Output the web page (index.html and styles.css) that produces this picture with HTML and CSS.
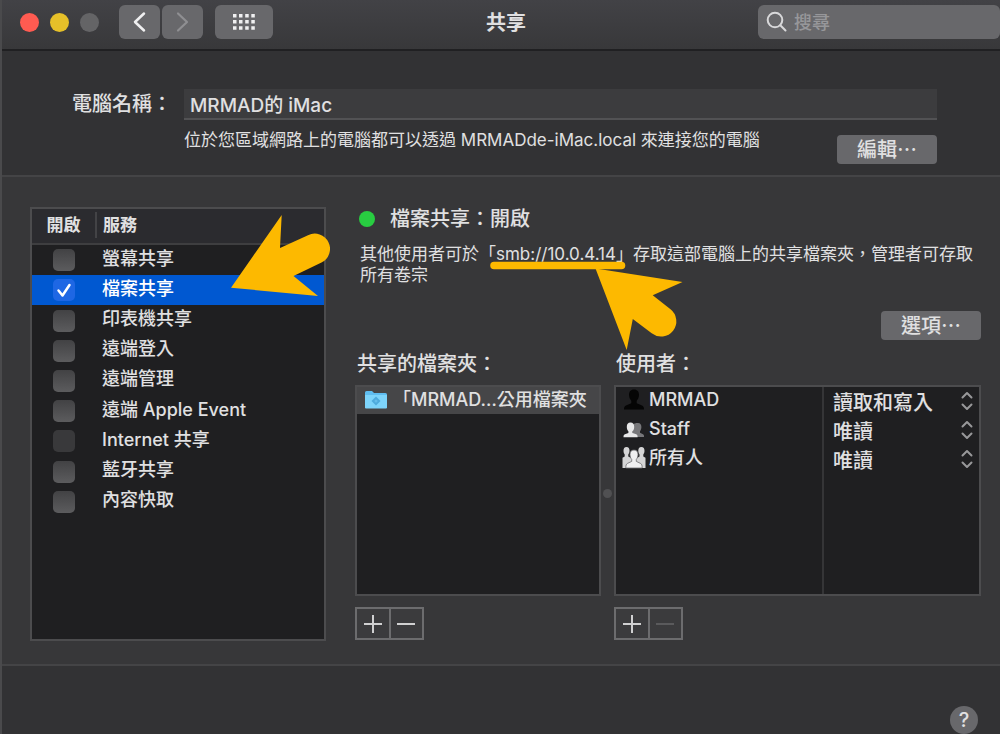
FILE: index.html
```html
<!DOCTYPE html>
<html lang="zh-Hant">
<head>
<meta charset="utf-8">
<title>共享</title>
<meta name="viewport" content="width=device-width, initial-scale=1">
<link rel="stylesheet" href="styles.css">
</head>
<body>
<div class="window">
  <header class="toolbar">
    <div class="toolbar-left">
      <div class="lights">
        <button class="light light-close" type="button" aria-label="關閉"></button>
        <button class="light light-min" type="button" aria-label="縮到最小"></button>
        <button class="light light-zoom" type="button" aria-label="縮放" disabled></button>
      </div>
      <div class="nav">
        <button class="tool" type="button" aria-label="返回"><svg width="41" height="34" viewBox="0 0 41 34"><path d="M25 8.500L16 17l9 8.500" fill="none" stroke="#f0f0f1" stroke-width="2.500" stroke-linecap="round" stroke-linejoin="round"/></svg></button>
        <button class="tool" type="button" aria-label="前往" disabled><svg width="41" height="34" viewBox="0 0 41 34"><path d="M16 8.500L25 17l-9 8.500" fill="none" stroke="#8f8f92" stroke-width="2.200" stroke-linecap="round" stroke-linejoin="round"/></svg></button>
      </div>
      <button class="tool tool-grid" type="button" aria-label="顯示全部"><svg width="58" height="34" viewBox="0 0 58 34" fill="#f0f0f1"><path d="M18 9h3.500v3.500H18zM24 9h3.500v3.500H24zM30.200 9h3.500v3.500h-3.500zM36.300 9h3.500v3.500h-3.500zM18 15h3.500v3.500H18zM24 15h3.500v3.500H24zM30.200 15h3.500v3.500h-3.500zM36.300 15h3.500v3.500h-3.500zM18 21.200h3.500v3.500H18zM24 21.200h3.500v3.500H24zM30.200 21.200h3.500v3.500h-3.500zM36.300 21.200h3.500v3.500h-3.500z"/></svg></button>
    </div>
    <h1 class="title">共享</h1>
    <label class="search">
      <svg width="22" height="22" viewBox="0 0 22 22" fill="none" stroke="#d8d8da" stroke-width="2" stroke-linecap="round"><circle cx="9" cy="9" r="7.300"/><path d="M14.300 14.300L19.500 19.500"/></svg>
      <input type="search" placeholder="搜尋" aria-label="搜尋">
    </label>
  </header>

  <section class="identity">
    <label class="name-label" for="computer-name">電腦名稱：</label>
    <input class="name-input" id="computer-name" type="text" value="MRMAD的 iMac">
    <div class="name-note">
      <p>位於您區域網路上的電腦都可以透過 MRMADde-iMac.local 來連接您的電腦</p>
      <button class="push" type="button">編輯⋯</button>
    </div>
  </section>

  <main class="content">
    <div class="services">
      <table>
        <thead><tr><th class="col-on" scope="col"><span>開啟</span></th><th scope="col">服務</th></tr></thead>
        <tbody>
          <tr><td><input id="s1" type="checkbox"></td><td><label for="s1">螢幕共享</label></td></tr>
          <tr class="selected"><td><input id="s2" type="checkbox" checked></td><td><label for="s2">檔案共享</label></td></tr>
          <tr><td><input id="s3" type="checkbox"></td><td><label for="s3">印表機共享</label></td></tr>
          <tr><td><input id="s4" type="checkbox"></td><td><label for="s4">遠端登入</label></td></tr>
          <tr><td><input id="s5" type="checkbox"></td><td><label for="s5">遠端管理</label></td></tr>
          <tr><td><input id="s6" type="checkbox"></td><td><label for="s6">遠端 Apple Event</label></td></tr>
          <tr><td><input id="s7" type="checkbox" disabled></td><td><label for="s7">Internet 共享</label></td></tr>
          <tr><td><input id="s8" type="checkbox"></td><td><label for="s8">藍牙共享</label></td></tr>
          <tr><td><input id="s9" type="checkbox"></td><td><label for="s9">內容快取</label></td></tr>
        </tbody>
      </table>
      <svg class="pointer pointer-service" width="100" height="84" viewBox="230 214 100 84" aria-hidden="true"><path d="M231 287.700L281.700 215 280 248 308 235.200A15 15 0 0 1 321.500 262.600L293.500 276 318 296z" fill="#fdb900"/></svg>
    </div>

    <div class="details">
      <h2 class="status"><span class="status-dot"></span>檔案共享：開啟</h2>
      <div class="explain">
        <p>其他使用者可於「smb://10.0.4.14」存取這部電腦上的共享檔案夾，管理者可存取所有卷宗</p>
        <svg class="pointer pointer-address" width="196" height="92" viewBox="488 260 196 92" aria-hidden="true"><path d="M494 265.500H621.500" fill="none" stroke="#fdb900" stroke-width="7.500" stroke-linecap="round"/><path d="M595.500 268.500L682.500 282 652.700 295.300 670.500 309.300A15 15 0 0 1 651.700 333.300L632.800 319 626.700 350z" fill="#fdb900"/></svg>
      </div>
      <button class="push options" type="button">選項⋯</button>

      <div class="lists">
        <section class="list-group">
          <h3>共享的檔案夾：</h3>
          <ul class="panel">
            <li class="folder"><svg width="22" height="18" viewBox="0 0 22 18"><path d="M0 1.500Q0 0 1.500 0H7l2 2H20.500Q22 2 22 3.500V17H0z" fill="#5fbdf0"/><path d="M0 4H22V16.500Q22 17.500 21 17.500H1Q0 17.500 0 16.500z" fill="#7dd4fb"/><path d="M11 5.500L15.500 10 11 14.500 6.500 10z" fill="#4eabdd"/><circle cx="11" cy="10" r="1.500" fill="#63bdeb"/></svg><span>「MRMAD…公用檔案夾</span></li>
          </ul>
          <div class="segmented">
            <button type="button" aria-label="加入檔案夾"><svg width="20" height="20" viewBox="0 0 20 20"><path d="M10 1v18M1 10h18"/></svg></button>
            <button type="button" aria-label="移除檔案夾"><svg width="20" height="20" viewBox="0 0 20 20"><path d="M1 10h18"/></svg></button>
          </div>
        </section>
        <div class="splitter"><span></span></div>
        <section class="list-group">
          <h3>使用者：</h3>
          <div class="panel users">
            <table>
              <tbody>
                <tr><td><div class="user"><svg width="24" height="24" viewBox="0 0 24 24" fill="#050505"><path d="M12 1.500c3.400 0 5 2.300 5 5.300 0 2.500-1 4.500-2.300 6v2.400l5.300 2.200c1.600.7 2 2 2 4.100H2c0-2.100.4-3.400 2-4.100l5.300-2.200v-2.400C8 11.300 7 9.300 7 6.800c0-3 1.600-5.300 5-5.300z"/></svg>MRMAD</div></td>
                <td><select aria-label="MRMAD 權限"><option>讀取和寫入</option><option>唯讀</option></select></td></tr>
                <tr><td><div class="user"><svg width="24" height="24" viewBox="0 0 24 24"><path d="M16 6c2.500 0 3.400 1.800 3.400 4 0 2-.7 3.300-1.400 4.200v1.600l3 1.400c1 .5 1 1.300 1 2.800H11V7.500C12 6.500 13.500 6 16 6z" fill="#77777a"/><path d="M8.500 5.500c2.600 0 3.700 1.900 3.700 4.200 0 2-.7 3.500-1.600 4.500v1.700l3.600 1.400c1.200.5 1.400 1.400 1.400 2.900H1.500c0-1.500.2-2.400 1.400-2.900l3.500-1.400v-1.700c-.9-1-1.600-2.500-1.600-4.500 0-2.300 1.100-4.200 3.700-4.200z" fill="#e8e8e9"/></svg>Staff</div></td>
                <td><select aria-label="Staff 權限"><option>唯讀</option><option>讀取和寫入</option></select></td></tr>
                <tr><td><div class="user"><svg width="24" height="24" viewBox="0 0 24 24"><path d="M4.500 1C6.700 1 7.500 2.700 7.500 4.800c0 1.800-.6 3-1.200 3.800v2L9 12h6l2.500-1.400v-2c-.6-.8-1.200-2-1.200-3.800C16.300 2.700 17.200 1 19.400 1s3.100 1.700 3.100 3.800c0 1.800-.6 3-1.200 3.800v2l2.200 1.200V22H.5V11.800l2.200-1.200v-2C2.100 7.800 1.500 6.600 1.500 4.800 1.500 2.700 2.300 1 4.500 1z" fill="#d5d5d6"/><path d="M12 4c2.900 0 4 2 4 4.600 0 2.100-.8 3.700-1.700 4.700v2.100l4 1.900c1.500.7 1.900 2 1.900 4.700H3.800c0-2.700.4-4 1.900-4.700l4-1.900v-2.100C8.800 12.300 8 10.700 8 8.600 8 6 9.100 4 12 4z" fill="#efeff0" stroke="#6c6c6e" stroke-width=".8"/></svg>所有人</div></td>
                <td><select aria-label="所有人權限"><option>唯讀</option><option>讀取和寫入</option></select></td></tr>
                <tr class="filler"><td></td><td></td></tr>
              </tbody>
            </table>
          </div>
          <div class="segmented">
            <button type="button" aria-label="加入使用者"><svg width="20" height="20" viewBox="0 0 20 20"><path d="M10 1v18M1 10h18"/></svg></button>
            <button type="button" aria-label="移除使用者" disabled><svg width="20" height="20" viewBox="0 0 20 20"><path d="M1 10h18"/></svg></button>
          </div>
        </section>
      </div>
    </div>
  </main>

  <footer class="footer"><button class="help" type="button" aria-label="輔助說明">?</button></footer>
</div>
</body>
</html>
```
FILE: styles.css
```css
* {
  box-sizing: border-box;
}

body,
h1,
h2,
h3,
p,
ul {
  margin: 0;
  padding: 0;
}

body {
  background: #323234;
  color: #e0e0e1;
  font-family: Inter, "Noto Sans CJK TC", sans-serif;
  font-size: 18px;
  font-weight: 500;
}

button,
input,
select {
  margin: 0;
  padding: 0;
  border: 0;
  color: inherit;
  font: inherit;
}

svg {
  display: block;
  flex: none;
}

.window {
  display: flex;
  flex-direction: column;
  min-height: 100vh;
  border-left: 2px solid #4a4a4c;
}

/* Toolbar */
.toolbar {
  display: grid;
  grid-template-columns: 1fr auto 1fr;
  align-items: start;
  height: 51px;
  padding: 5px 0 0 10px;
  background: linear-gradient(#424246, #38383a);
  border-bottom: 2px solid #202022;
}

.toolbar-left {
  display: flex;
  align-items: center;
  gap: 12px;
}

.lights {
  display: flex;
  gap: 11px;
  padding: 0 8px;
}

.light {
  width: 19px;
  height: 19px;
  border-radius: 50%;
}

.light-close {
  background: #ff5b51;
}

.light-min {
  background: #e6c029;
}

.light-zoom {
  background: #646466;
}

.nav {
  display: flex;
  gap: 2px;
}

.tool {
  height: 34px;
  border-radius: 6px;
  background: #68686b;
}

.title {
  font-size: 20px;
  line-height: 36px;
  font-weight: 700;
}

.search {
  display: flex;
  align-items: center;
  justify-self: end;
  gap: 6px;
  width: 242px;
  height: 34px;
  padding: 0 8px;
  border-radius: 6px;
  background: #68686b;
}

.search input {
  flex: 1;
  min-width: 0;
  background: none;
  outline: 0;
}

.search input::placeholder {
  color: #97979a;
  opacity: 1;
}

/* Computer name */
.identity {
  display: grid;
  grid-template-columns: 112px 1fr;
  padding: 38px 63px 11px 70px;
  border-bottom: 2px solid #444446;
}

.name-label {
  font-size: 20px;
  line-height: 31px;
  white-space: nowrap;
}

.name-input {
  width: 100%;
  height: 31px;
  padding: 0 6px;
  background: #3c3c3e;
  border-bottom: 2px solid #525254;
  font-size: 19px;
}

.name-note {
  grid-column: 2;
  display: flex;
  justify-content: space-between;
}

.name-note p {
  padding-top: 9px;
  font-size: 17px;
  font-weight: 400;
  line-height: 22px;
}

.push {
  width: 100px;
  height: 29px;
  border-radius: 4px;
  background: #68686b;
  font-size: 20px;
  line-height: 28px;
}

.name-note .push {
  margin-top: 15px;
}

/* Main content */
.content {
  display: flex;
  gap: 29px;
  padding: 30px 19px 23px 28px;
  background: #373739;
  border-bottom: 2px solid #444446;
}

.services {
  position: relative;
  flex: 0 0 296px;
  height: 434px;
  background: #1f1f21;
  border: 2px solid #4c4c4e;
}

.services table {
  width: 100%;
  height: 308px;
  border-collapse: collapse;
}

.services th {
  height: 35px;
  padding: 0 0 2px 6px;
  background: #2b2b2f;
  border-bottom: 2px solid #3e3e40;
  font-size: 17px;
  font-weight: 700;
  line-height: 26px;
  text-align: left;
}

.services .col-on {
  width: 65px;
  padding: 0 0 2px;
}

.col-on span {
  display: block;
  border-right: 2px solid #434346;
  text-align: center;
}

.services td {
  padding: 0 0 3px 5px;
  line-height: 26px;
}

.services td:first-child {
  padding: 0 0 0 21px;
}

.services input {
  display: block;
  width: 22px;
  height: 22px;
  border-radius: 5px;
  appearance: none;
  background: linear-gradient(#424244, #5c5c5e);
}

.services input:disabled {
  background: #39393b;
}

.services input:checked {
  background: #1e67e4 url("data:image/svg+xml,%3Csvg xmlns='http://www.w3.org/2000/svg' viewBox='0 0 22 22'%3E%3Cpath d='M5.500 11.500L9.500 16.500 16.500 6' fill='none' stroke='%23fff' stroke-width='2.500' stroke-linecap='round' stroke-linejoin='round'/%3E%3C/svg%3E");
}

.selected {
  background: #0058d1;
  color: #ffffff;
}

.pointer {
  position: absolute;
  pointer-events: none;
}

.pointer-service {
  top: 5px;
  left: 198px;
}

.details {
  flex: 1;
  min-width: 0;
}

.status {
  display: flex;
  align-items: center;
  gap: 15px;
  padding-left: 4px;
  font-size: 20px;
  font-weight: 500;
  line-height: 24px;
}

.status-dot {
  width: 16px;
  height: 16px;
  border-radius: 50%;
  background: #28cd41;
}

.explain {
  position: relative;
  margin: 13px 0 25px;
  padding-left: 5px;
  font-size: 17px;
  font-weight: 400;
  line-height: 21px;
}

.pointer-address {
  top: 16px;
  left: 133px;
}

.options {
  display: block;
  margin-left: auto;
}

.lists {
  display: flex;
  margin-top: 12px;
}

.list-group {
  flex: 246 1 0;
  min-width: 0;
}

.splitter + .list-group {
  flex-grow: 367;
}

.list-group h3 {
  padding-left: 2px;
  font-size: 20px;
  font-weight: 500;
  line-height: 24px;
}

.panel {
  height: 211px;
  margin: 9px 0 11px;
  background: #1f1f21;
  border: 2px solid #4c4c4e;
  list-style: none;
}

.folder {
  display: flex;
  align-items: center;
  gap: 6px;
  height: 27px;
  padding: 0 0 2px 8px;
  background: #464648;
  line-height: 24px;
  white-space: nowrap;
}

.splitter {
  display: flex;
  flex: 0 0 13px;
  align-items: center;
  justify-content: center;
  padding-bottom: 6px;
}

.splitter span {
  width: 9px;
  height: 9px;
  border-radius: 50%;
  background: #505052;
}

.users table {
  width: 100%;
  height: 100%;
  border-collapse: collapse;
}

.users td {
  height: 29px;
  padding: 0;
}

.users td:first-child {
  width: 57%;
  border-right: 2px solid #353537;
}

.users .filler td {
  height: auto;
}

.user {
  display: flex;
  align-items: center;
  gap: 3px;
  padding: 0 0 3px 6px;
  line-height: 24px;
}

.users select {
  display: block;
  width: 100%;
  height: 29px;
  padding: 2px 0 0 9px;
  appearance: none;
  background: url("data:image/svg+xml,%3Csvg xmlns='http://www.w3.org/2000/svg' width='12' height='20' viewBox='0 0 12 20'%3E%3Cpath d='M1.500 6.500L6 2 10.500 6.500M1.500 13.500L6 18 10.500 13.500' fill='none' stroke='%2398989a' stroke-width='2' stroke-linecap='round' stroke-linejoin='round'/%3E%3C/svg%3E") no-repeat right 6px top 4px;
  font-size: 20px;
  line-height: 26px;
}

.segmented {
  display: flex;
  width: 69px;
  height: 33px;
  border: 2px solid #6c6c6e;
}

.segmented button {
  display: flex;
  flex: 1;
  align-items: center;
  justify-content: center;
  background: #3b3b3d;
}

.segmented button + button {
  border-left: 2px solid #6c6c6e;
}

.segmented path {
  fill: none;
  stroke: #d0d0d1;
  stroke-width: 2;
}

.segmented button:disabled path {
  stroke: #5a5a5c;
}

/* Footer */
.footer {
  display: flex;
  flex: 1;
  align-items: flex-end;
  justify-content: flex-end;
  padding-right: 22px;
}

.help {
  width: 28px;
  height: 28px;
  border-radius: 50%;
  background: #68686b;
  font-size: 20px;
  font-weight: 500;
  line-height: 28px;
}
```
